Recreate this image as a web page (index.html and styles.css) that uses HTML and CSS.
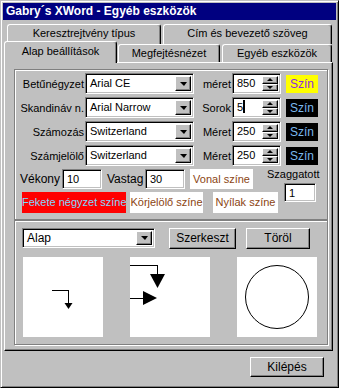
FILE: index.html
```html
<!DOCTYPE html>
<html lang="hu">
<head>
    <meta charset="UTF-8">
    <title>Gabry´s XWord - Egyéb eszközök</title>
    <link rel="stylesheet" href="styles.css">
</head>

<body>
    <div class="win">
        <!--1. címsor-->
        <div class="titlebar">Gabry´s XWord - Egyéb eszközök</div>

        <!--2. fülek-->
        <div class="tabctl">
            <div class="tabrow back">
                <div class="tab t1">Keresztrejtvény típus</div>
                <div class="tab t2">Cím és bevezető szöveg</div>
            </div>
            <div class="tabrow front">
                <div class="tab sel">Alap beállítások</div>
                <div class="tab t3">Megfejtésnézet</div>
                <div class="tab t4">Egyéb eszközök</div>
            </div>

            <!--3. lap-->
            <div class="sheet">
                <div class="group g1">
                    <div class="frow">
                        <span class="lbl">Betűnégyzet</span>
                        <div class="combo"><span class="val">Arial CE</span><span class="drop"></span></div>
                        <span class="lbl2">méret</span>
                        <div class="spin"><span class="val">850</span><span class="spbtn"><i class="up"></i><i class="dn"></i></span></div>
                        <div class="color yellow">Szín</div>
                    </div>
                    <div class="frow">
                        <span class="lbl">Skandináv n.</span>
                        <div class="combo"><span class="val">Arial Narrow</span><span class="drop"></span></div>
                        <span class="lbl2">Sorok</span>
                        <div class="spin"><span class="val">5<b class="caret"></b></span><span class="spbtn"><i class="up"></i><i class="dn"></i></span></div>
                        <div class="color black">Szín</div>
                    </div>
                    <div class="frow">
                        <span class="lbl">Számozás</span>
                        <div class="combo"><span class="val">Switzerland</span><span class="drop"></span></div>
                        <span class="lbl2">Méret</span>
                        <div class="spin"><span class="val">250</span><span class="spbtn"><i class="up"></i><i class="dn"></i></span></div>
                        <div class="color black">Szín</div>
                    </div>
                    <div class="frow">
                        <span class="lbl">Számjelölő</span>
                        <div class="combo"><span class="val">Switzerland</span><span class="drop"></span></div>
                        <span class="lbl2">Méret</span>
                        <div class="spin"><span class="val">250</span><span class="spbtn"><i class="up"></i><i class="dn"></i></span></div>
                        <div class="color black">Szín</div>
                    </div>

                    <div class="lower">
                        <div class="lowleft">
                            <div class="prow">
                                <span class="plbl w1">Vékony</span>
                                <div class="edit e40"><span class="val">10</span></div>
                                <span class="plbl w2">Vastag</span>
                                <div class="edit e40"><span class="val">30</span></div>
                                <div class="cbtn vonal">Vonal színe</div>
                            </div>
                            <div class="crow">
                                <div class="cbtn red">Fekete négyzet színe</div>
                                <div class="cbtn kor">Körjelölő színe</div>
                                <div class="cbtn nyil">Nyílak színe</div>
                            </div>
                        </div>
                        <div class="szag">
                            <span class="szlbl">Szaggatott</span>
                            <div class="edit e32"><span class="val">1</span></div>
                        </div>
                    </div>
                </div>

                <div class="group g2">
                    <div class="toprow">
                        <div class="combo alap"><span class="val">Alap</span><span class="drop"></span></div>
                        <div class="btn szerk">Szerkeszt</div>
                        <div class="btn torol">Töröl</div>
                    </div>
                    <div class="previews">
                        <div class="pbox">
                            <svg width="80" height="80" viewBox="0 0 80 80">
                                <path d="M29 33.5H45.5V47" fill="none" stroke="#000" shape-rendering="crispEdges"/>
                                <polygon points="41.5,46 49.5,46 45.5,52"/>
                            </svg>
                        </div>
                        <div class="pbox">
                            <svg width="80" height="80" viewBox="0 0 80 80">
                                <path d="M0 8.5H27.5V18" fill="none" stroke="#000" shape-rendering="crispEdges"/>
                                <polygon points="20,17 35,17 27.5,31"/>
                                <path d="M0 41.5H14" fill="none" stroke="#000" shape-rendering="crispEdges"/>
                                <polygon points="13,34 13,48 27,41"/>
                            </svg>
                        </div>
                        <div class="pbox">
                            <svg width="80" height="80" viewBox="0 0 80 80">
                                <circle cx="40" cy="40" r="31.5" fill="none" stroke="#000"/>
                            </svg>
                        </div>
                    </div>
                </div>
            </div>
        </div>

        <!--4. kilépés-->
        <div class="footer">
            <div class="btn kilep">Kilépés</div>
        </div>
    </div>
</body>
</html>
```

FILE: styles.css
```css
html,
body {
    margin: 0;
    padding: 0;
}

body {
    background-color: #c0c0c0;
    font: 11px "Liberation Sans", Arial, sans-serif;
    color: #000;
}

/*ablak*/
.win {
    box-sizing: border-box;
    width: 339px;
    height: 388px;
    border: 1px solid;
    border-color: #c0c0c0 #000 #000 #c0c0c0;
    box-shadow: inset 1px 1px #fff, inset -1px -1px #808080;
    padding: 2px;
    display: flex;
    flex-direction: column;
}

/*1.címsor*/
.titlebar {
    height: 17px;
    line-height: 17px;
    padding-left: 3px;
    background: #000080;
    color: #fff;
    font-weight: bold;
    font-size: 12px;
}

/*2.fülek*/
.tabctl {
    margin: 4px 3px 0 1px;
}

.tabrow {
    display: flex;
    align-items: flex-start;
}

.tabrow.back {
    height: 20px;
    padding-left: 3px;
}

.tabrow.front {
    height: 21px;
    margin-top: -3px;
}

.tab {
    box-sizing: border-box;
    border: 1px solid;
    border-color: #fff #000 transparent #fff;
    border-bottom: none;
    border-radius: 3px 3px 0 0;
    box-shadow: inset -1px 0 #808080;
    background: #c0c0c0;
    text-align: center;
    white-space: nowrap;
}

.back .tab {
    height: 20px;
    line-height: 17px;
}

.t1 {
    width: 154px;
}

.t2 {
    width: 169px;
    margin-left: 2px;
}

.sel {
    position: relative;
    z-index: 2;
    width: 113px;
    height: 22px;
    line-height: 18px;
}

.t3,
.t4 {
    height: 18px;
    margin-top: 3px;
    line-height: 17px;
}

.t3 {
    width: 102px;
    margin-left: 1px;
}

.t4 {
    width: 110px;
    margin-left: 2px;
}

/*3.lap*/
.sheet {
    box-sizing: border-box;
    height: 289px;
    border: 1px solid;
    border-color: #fff #000 #000 #fff;
    box-shadow: inset -1px -1px #808080;
    padding: 6px 4px 5px 9px;
}

/*csoport keret (vésett)*/
.group {
    box-sizing: border-box;
    border: 1px solid #808080;
    box-shadow: 1px 1px #fff, inset 1px 1px #fff;
}

.g1 {
    height: 151px;
    padding-top: 3px;
}

.g2 {
    height: 125px;
    padding: 7px 0 0 7px;
}

/*beviteli mezők - közös*/
.combo,
.spin,
.edit {
    box-sizing: border-box;
    display: flex;
    background: #fff;
    border: 1px solid;
    border-color: #808080 #fff #fff #808080;
    box-shadow: inset 1px 1px #000, inset -1px -1px #c0c0c0;
    padding: 2px;
}

.val {
    flex: 1;
    padding-left: 2px;
    line-height: 15px;
    white-space: nowrap;
}

.drop {
    width: 16px;
    box-sizing: border-box;
    background: #c0c0c0;
    border: 1px solid;
    border-color: #fff #000 #000 #fff;
    box-shadow: inset -1px -1px #808080;
    display: flex;
    align-items: center;
    justify-content: center;
}

.drop::after {
    content: "";
    border-left: 4px solid transparent;
    border-right: 3px solid transparent;
    border-top: 4px solid #000;
}

/*felső 4 sor*/
.frow {
    display: flex;
    align-items: center;
    height: 21px;
    margin-bottom: 3px;
}

.lbl {
    box-sizing: border-box;
    width: 70px;
    padding-right: 1px;
    text-align: right;
    white-space: nowrap;
}

.combo {
    width: 109px;
    height: 21px;
}

.lbl2 {
    box-sizing: border-box;
    width: 38px;
    padding-right: 1px;
    text-align: right;
}

.spin {
    width: 49px;
    height: 21px;
}

.spbtn {
    width: 16px;
    display: flex;
    flex-direction: column;
}

.spbtn i {
    flex: 1;
    box-sizing: border-box;
    background: #c0c0c0;
    border: 1px solid;
    border-color: #fff #000 #000 #fff;
    box-shadow: inset -1px -1px #808080;
    display: flex;
    align-items: center;
    justify-content: center;
}

.spbtn .up::after {
    content: "";
    border-left: 3px solid transparent;
    border-right: 3px solid transparent;
    border-bottom: 3px solid #000;
}

.spbtn .dn::after {
    content: "";
    border-left: 3px solid transparent;
    border-right: 3px solid transparent;
    border-top: 3px solid #000;
}

.caret {
    display: inline-block;
    width: 2px;
    height: 13px;
    background: #000;
    vertical-align: -2px;
}

/*szín gombok*/
.color {
    width: 32px;
    height: 18px;
    margin-left: 5px;
    line-height: 18px;
    text-align: center;
    font-size: 12px;
}

.yellow {
    background: #ffff00;
    color: #8a2be2;
}

.black {
    background: #000;
    color: #7ab8ee;
}

/*alsó rész*/
.lower {
    display: flex;
    margin-top: 3px;
}

.lowleft {
    width: 238px;
    flex-shrink: 0;
}

.prow {
    display: flex;
    align-items: center;
    height: 20px;
    padding-left: 5px;
}

.plbl {
    font-size: 12px;
}

.w1 {
    width: 42px;
}

.w2 {
    width: 38px;
    margin-left: 5px;
}

.e40 {
    width: 40px;
    height: 20px;
}

.cbtn {
    flex-shrink: 0;
    height: 21px;
    line-height: 21px;
    text-align: center;
    background: #fff;
    color: #8b4513;
    white-space: nowrap;
}

.vonal {
    width: 63px;
    height: 20px;
    line-height: 20px;
    margin-left: 5px;
}

.crow {
    display: flex;
    margin-top: 3px;
    padding-left: 7px;
}

.red {
    width: 104px;
    background: #ff0000;
    color: #80d8ff;
}

.kor {
    width: 73px;
    margin-left: 4px;
}

.nyil {
    width: 65px;
    margin-left: 10px;
}

.szag {
    margin-left: 14px;
    width: 52px;
    display: flex;
    flex-direction: column;
}

.szlbl {
    margin-top: -2px;
    line-height: 14px;
    white-space: nowrap;
}

.e32 {
    width: 32px;
    height: 19px;
    margin: 2px 0 0 17px;
}

/*2.csoport*/
.toprow {
    display: flex;
    align-items: flex-start;
}

.alap {
    width: 133px;
    height: 20px;
}

.alap .val {
    line-height: 14px;
    font-size: 12px;
}

.btn {
    box-sizing: border-box;
    height: 21px;
    line-height: 18px;
    text-align: center;
    background: #c0c0c0;
    border: 1px solid;
    border-color: #fff #000 #000 #fff;
    box-shadow: inset -1px -1px #808080;
    font-size: 12px;
}

.szerk {
    width: 67px;
    margin-left: 14px;
}

.torol {
    width: 64px;
    margin-left: 10px;
}

.previews {
    display: flex;
    gap: 27px;
    margin-top: 8px;
    padding-left: 1px;
}

.pbox {
    width: 80px;
    height: 80px;
    background: #fff;
}

.pbox svg {
    display: block;
}

/*4.kilépés*/
.footer {
    display: flex;
    justify-content: flex-end;
    padding-top: 6px;
}

.kilep {
    width: 74px;
    height: 20px;
    margin-right: 12px;
}
```
